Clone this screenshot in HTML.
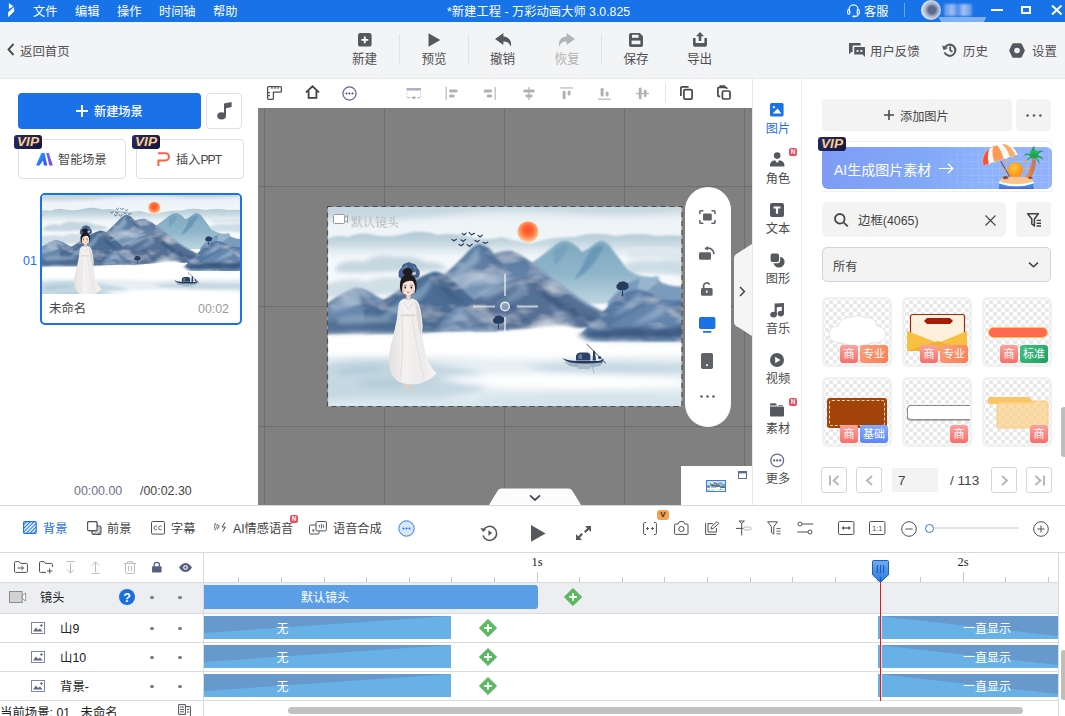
<!DOCTYPE html>
<html lang="zh-CN">
<head>
<meta charset="utf-8">
<title>万彩动画大师</title>
<style>
*{box-sizing:border-box;margin:0;padding:0}
html,body{width:1065px;height:716px;overflow:hidden;background:#fff}
body{font-family:"Liberation Sans","Noto Sans CJK SC",sans-serif;font-size:13px;color:#333;position:relative}
.abs{position:absolute}
#app{position:absolute;left:0;top:0;width:1065px;height:716px;overflow:hidden;background:#fff}
svg{display:block;overflow:visible}
.t{position:absolute;white-space:nowrap;line-height:1;margin-top:1px}
/* title bar */
#title{left:0;top:0;width:1065px;height:22px;background:#1773e7;color:#fff}
#title .t{font-size:12.2px;top:5px}
/* toolbar */
#tool{left:0;top:22px;width:1065px;height:57px;background:#f3f4f6;border-bottom:1px solid #e9eaec}
#tool .lbl{font-size:12.6px;color:#505050;top:29.5px;transform:translateX(-50%)}
#tool .r{font-size:12.4px;color:#505050;top:23px}
#tool .sep{position:absolute;width:1px;top:12px;height:31px;background:#e3e4e7}

.vip{position:absolute;width:28px;height:14px;border-radius:3px;background:linear-gradient(135deg,#2a2a66,#14143f);}
.vip svg{position:absolute;left:0;top:0}
.obtn{position:absolute;border:1px solid #dcdfe6;border-radius:4px;background:#fff}
/* left panel */
#left{left:0;top:79px;width:258px;height:426px;background:#fff}
/* canvas */
#cvbar{left:258px;top:79px;width:494px;height:29px;background:#fff}
#cv{left:258px;top:108px;width:494px;height:397px;background:#808080;overflow:hidden}
/* right */
#rnav{left:752px;top:79px;width:50px;height:426px;background:#fff;border-right:1px solid #ececec}
#rnav .t{font-size:13px;color:#4a4a4a;transform:translateX(-50%);left:25px}
#rpanel{left:802px;top:79px;width:263px;height:426px;background:#fff}

.nb{position:absolute;width:8px;height:8px;border-radius:2px;background:#f0475a;color:#fff;font-size:6.5px;font-weight:700;line-height:8px;text-align:center}
.gbtn{position:absolute;background:#f3f3f3;border-radius:4px}
.tile{position:absolute;width:70px;height:70px;border-radius:6px;border:2px solid #f1f1f1;overflow:hidden;background-color:#fff;background-image:conic-gradient(#e9e9e9 25%,#fff 0 50%,#e9e9e9 0 75%,#fff 0);background-size:8px 8px;background-position:1px 1px}
.bd{position:absolute;height:18px;border-radius:3px;color:#fff;font-size:11px;line-height:18px;text-align:center;top:46px}
.bs{width:18px;background:linear-gradient(180deg,#fda19c,#f5706b)}
.bp{width:28px;background:linear-gradient(135deg,#fca17f,#fb7d52)}
.bg{width:28px;background:linear-gradient(135deg,#45bf85,#1f9f60)}
.bb{width:28px;background:linear-gradient(180deg,#86abff,#5c86f6)}
.pg{position:absolute;top:388px;width:26px;height:26px;border:1px solid #d3d6de;border-radius:3px;background:#fff}
/* timeline */
#tl{left:0;top:505px;width:1065px;height:211px;background:#fff}

#tl .tab{font-size:12.2px;color:#444;top:17px}
#tl .hl{position:absolute;height:1px;background:#d9dbdf}
#tl .dot{position:absolute;width:3.6px;height:3.6px;border-radius:50%;background:#7d7d7d}
#tl .blk{position:absolute;height:23px}
#tl .bt{position:absolute;font-size:12px;color:#fff;line-height:1;white-space:nowrap;margin-top:1px}
</style>
</head>
<body>
<div id="app">
<svg width="0" height="0" style="position:absolute"><defs>
<filter id="b05" x="-10%" y="-10%" width="120%" height="120%"><feGaussianBlur stdDeviation="0.5"/></filter>
<filter id="b1" x="-10%" y="-10%" width="120%" height="120%"><feGaussianBlur stdDeviation="1"/></filter>
<filter id="b2" x="-20%" y="-20%" width="140%" height="140%"><feGaussianBlur stdDeviation="2"/></filter>
<filter id="b3" x="-20%" y="-30%" width="140%" height="160%"><feGaussianBlur stdDeviation="3"/></filter>
<filter id="b5" x="-30%" y="-50%" width="160%" height="200%"><feGaussianBlur stdDeviation="5"/></filter>
<filter id="tex" x="-5%" y="-5%" width="110%" height="110%"><feTurbulence type="fractalNoise" baseFrequency="0.025 0.05" numOctaves="3" seed="7" result="n"/><feColorMatrix in="n" type="matrix" values="0 0 0 0 0.9  0 0 0 0 0.94  0 0 0 0 0.98  1.45 0 0 0 -0.71" result="w"/><feGaussianBlur in="SourceGraphic" stdDeviation="1" result="bl"/><feComposite in="w" in2="bl" operator="in" result="wm"/><feMerge><feMergeNode in="bl"/><feMergeNode in="wm"/></feMerge></filter>
<filter id="texd" x="-5%" y="-5%" width="110%" height="110%"><feTurbulence type="fractalNoise" baseFrequency="0.05 0.03" numOctaves="2" seed="11" result="n"/><feColorMatrix in="n" type="matrix" values="0 0 0 0 0.16  0 0 0 0 0.25  0 0 0 0 0.42  2.6 0 0 0 -1.15" result="w"/><feGaussianBlur in="SourceGraphic" stdDeviation="1" result="bl"/><feComposite in="w" in2="bl" operator="in" result="wm"/><feMerge><feMergeNode in="bl"/><feMergeNode in="wm"/></feMerge></filter>
<linearGradient id="bd1" x1="0" y1="0" x2="0" y2="1"><stop offset="0" stop-color="#aec7d4"/><stop offset="0.45" stop-color="#c2d5df" stop-opacity="0.85"/><stop offset="1" stop-color="#dde8ee" stop-opacity="0"/></linearGradient>
<linearGradient id="sky" x1="0" y1="0" x2="0" y2="1"><stop offset="0" stop-color="#dfe9ee"/><stop offset="0.08" stop-color="#edf3f6"/><stop offset="0.3" stop-color="#f6f9fb"/><stop offset="0.6" stop-color="#f9fbfc"/><stop offset="1" stop-color="#e3edf2"/></linearGradient>
<radialGradient id="sun" cx="0.5" cy="0.42" r="0.55"><stop offset="0" stop-color="#ff4f22"/><stop offset="0.45" stop-color="#ff6a38"/><stop offset="0.8" stop-color="#ffa873"/><stop offset="1" stop-color="#ffd6a8"/></radialGradient>
<linearGradient id="mt1" x1="0" y1="0" x2="0" y2="1"><stop offset="0" stop-color="#5d7ea3"/><stop offset="0.5" stop-color="#4a6b92"/><stop offset="1" stop-color="#6f8fb1"/></linearGradient>
<linearGradient id="mt2" x1="0" y1="0" x2="0" y2="1"><stop offset="0" stop-color="#46678f"/><stop offset="0.6" stop-color="#587aa0"/><stop offset="1" stop-color="#7d9cba"/></linearGradient>
<linearGradient id="mtA" x1="0" y1="0" x2="0" y2="1"><stop offset="0" stop-color="#55769d"/><stop offset="0.4" stop-color="#6584a8"/><stop offset="0.75" stop-color="#8da7c2"/><stop offset="1" stop-color="#cbd9e4"/></linearGradient>
<linearGradient id="far" x1="0" y1="0" x2="0" y2="1"><stop offset="0" stop-color="#7ea8c1"/><stop offset="0.5" stop-color="#8fb5ca"/><stop offset="1" stop-color="#c3d8e2"/></linearGradient>
<linearGradient id="dress" x1="0" y1="0" x2="1" y2="0"><stop offset="0" stop-color="#e4e0e0"/><stop offset="0.35" stop-color="#f4f2f1"/><stop offset="0.7" stop-color="#eceaea"/><stop offset="1" stop-color="#f7f6f5"/></linearGradient>
<symbol id="scene" viewBox="0 0 354 200" overflow="hidden">
<rect width="354" height="200" fill="url(#sky)"/>
<!-- top haze -->
<g filter="url(#b3)"><path d="M-10 -8 H364 V5 Q300 12 240 7 T120 9 T-10 12 Z" fill="#b9cfda" opacity="0.7"/></g>
<!-- cloud band 1 -->
<g filter="url(#b1)" transform="translate(0 1)">
<path d="M-6 34 Q6 27 20 30 Q32 24 46 28 Q60 31 76 27 Q94 22 110 28 Q126 25 140 30 Q158 34 174 30 Q190 35 204 36 Q226 29 246 30 Q266 24 288 29 Q310 25 330 29 Q344 27 360 30 V52 H-6 Z" fill="url(#bd1)"/>
</g>
<!-- cloud band 2 left -->
<g filter="url(#b2)">
<path d="M8 60 Q20 52 36 56 Q50 46 68 51 Q86 49 98 56 Q112 55 120 62 Q100 67 70 65 Q36 68 8 66 Z" fill="#c6d7e0"/>
<path d="M-6 80 Q16 70 40 75 Q56 68 78 73 Q92 72 104 78 L100 86 L-6 92 Z" fill="#cfdde5" opacity="0.95"/>
<path d="M100 70 Q118 62 132 66 L120 76 Z" fill="#d2e0e7" opacity="0.8"/>
</g>
<!-- right cloud -->
<g filter="url(#b2)"><path d="M296 58 Q312 52 330 55 Q344 52 360 56 V70 Q330 66 300 68 Z" fill="#cddde5"/><path d="M300 44 Q330 40 360 46 V54 Q330 50 300 52 Z" fill="#dbe7ec"/></g>
<!-- sun -->
<circle cx="200" cy="26" r="10.6" fill="url(#sun)" filter="url(#b05)"/>
<!-- far mountains -->
<g filter="url(#b1)">
<path d="M196 62 Q214 50 226 40 Q234 33 242 36 Q250 40 254 46 Q262 42 268 37 Q275 32 282 40 Q292 54 300 64 Q316 74 330 70 L340 96 L196 100 Z" fill="url(#far)"/>
<path d="M262 44 Q270 38 276 40 Q272 50 262 62 Q254 70 246 74 Q256 58 262 44 Z" fill="#5f8fb0" opacity="0.7"/>
<path d="M226 44 Q234 38 240 40 Q236 52 226 60 Z" fill="#6d9bb8" opacity="0.6"/>
</g>
<!-- right back mountain -->
<g filter="url(#b1)"><path d="M280 96 Q296 76 312 72 Q322 70 332 76 Q346 82 360 80 V112 H280 Z" fill="#7a9bbc"/>
<path d="M312 72 Q322 70 330 76 Q322 84 306 92 Q310 82 312 72 Z" fill="#a3bcd2" opacity="0.8"/></g>
<!-- main big mountain -->
<g filter="url(#tex)">
<path d="M100 84 Q122 64 136 50 Q146 38 152 38 Q160 40 166 48 Q176 44 184 45 Q196 50 208 60 Q224 72 240 84 Q262 100 290 112 L290 122 L100 122 Z" fill="url(#mtA)"/>
</g>
<g filter="url(#b2)">
<path d="M150 40 Q140 56 122 70 Q140 68 152 54 Z" fill="#8eabc8" opacity="0.85"/>
<path d="M154 42 Q162 56 178 66 Q168 50 160 44 Z" fill="#48668d" opacity="0.7"/>
<path d="M184 47 Q198 58 214 70 Q230 82 246 92 Q226 78 208 64 Q196 52 184 47 Z" fill="#4a688f" opacity="0.55"/>
<path d="M120 72 Q150 62 190 74 Q166 80 120 80 Z" fill="#b4c8da" opacity="0.6"/>
</g>
<!-- far-left mountain -->
<g filter="url(#tex)">
<path d="M-4 100 Q10 88 27 82 Q38 82 48 90 Q58 96 72 98 L72 128 L-4 128 Z" fill="#6788ac"/>
</g>
<g filter="url(#b2)">
<path d="M27 83 Q18 96 2 106 Q20 104 32 94 Z" fill="#9bb6cf" opacity="0.8"/>
<path d="M30 84 Q42 100 60 110 Q44 110 34 100 Z" fill="#456389" opacity="0.6"/>
</g>
<!-- mid-left mountain -->
<g filter="url(#tex)">
<path d="M36 104 Q58 94 74 82 Q92 70 106 65.6 Q116 66 126 76 Q140 90 160 104 Q170 112 182 124 L36 128 Z" fill="#4b6c93"/>
</g>
<g filter="url(#b2)">
<path d="M106 67 Q96 82 78 92 Q62 100 52 114 Q76 106 94 92 Q104 82 106 67 Z" fill="#86a5c3" opacity="0.8"/>
<path d="M108 68 Q120 86 138 98 Q126 96 116 86 Q110 78 108 68 Z" fill="#34537b" opacity="0.65"/>
<path d="M84 100 Q94 108 100 120 Q90 116 84 100 Z" fill="#36557d" opacity="0.5"/>
</g>
<!-- front centre mountain -->
<g filter="url(#tex)">
<path d="M138 100 Q160 84 178 76 Q196 70 210 72 Q226 78 246 92 Q268 106 292 113 Q270 124 240 121 Q220 119 200 123 L146 126 Z" fill="#546f95"/>
</g>
<g filter="url(#b2)">
<path d="M148 88 Q170 76 196 75 Q178 84 158 93 Z" fill="#a9c0d5" opacity="0.6"/>
<path d="M196 74 Q186 88 166 100 Q186 98 200 86 Z" fill="#7d9bbb" opacity="0.7"/>
<path d="M206 74 Q220 90 244 102 Q262 112 280 116 Q254 114 232 104 Q214 94 206 74 Z" fill="#35517a" opacity="0.75"/>
<path d="M176 92 Q190 104 206 118 Q190 112 180 104 Z" fill="#3a577f" opacity="0.55"/>
<path d="M222 96 Q232 108 250 116 Q236 116 226 108 Z" fill="#8aa6c3" opacity="0.5"/>
</g>
<!-- small front hill -->
<g filter="url(#tex)">
<path d="M106 124 Q120 106 133 100 Q146 102 160 116 L170 126 Z" fill="#6383a9"/>
</g>
<g filter="url(#b2)">
<path d="M133 101 Q124 112 112 122 Q128 118 136 108 Z" fill="#90adc9" opacity="0.7"/>
<path d="M136 102 Q146 112 160 122 Q148 120 140 112 Z" fill="#3d5b83" opacity="0.6"/>
</g>
<!-- right dark mountains -->
<g filter="url(#tex)">
<path d="M262 118 Q278 102 292 90 Q304 82 314 84 Q326 90 340 94 Q350 96 360 92 V134 H244 Q254 128 262 118 Z" fill="#5677a0"/>
<path d="M276 124 Q300 108 320 98 Q332 93 342 96 Q352 100 360 104 V136 H246 Q262 132 276 124 Z" fill="#6485ab"/>
</g>
<g filter="url(#b2)">
<path d="M312 85 Q300 98 282 110 Q302 106 316 94 Z" fill="#93afca" opacity="0.7"/>
<path d="M336 97 Q322 108 304 118 Q324 116 338 106 Z" fill="#9ab5cf" opacity="0.7"/>
<path d="M340 98 Q348 108 360 114 V104 Q350 102 340 98 Z" fill="#3a5981" opacity="0.6"/>
<path d="M246 130 Q284 120 322 122 Q344 124 360 118 V132 H240 Z" fill="#36557d" opacity="0.9"/>
</g>
<!-- bottom dark edge of left mountains -->
<g filter="url(#b2)">
<path d="M-4 116 Q30 110 60 116 Q90 122 120 120 Q104 128 60 127 L-4 128 Z" fill="#4a6a91" opacity="0.85"/>
<path d="M10 112 Q40 106 70 114 Q40 118 10 118 Z" fill="#a9c0d6" opacity="0.5"/>
</g>
<!-- trees -->
<g filter="url(#b05)" fill="#263c60">
<g transform="translate(170.6 116.4) scale(0.82) translate(-171 -115)"><path d="M164.6 114.4 Q163 111 166 109.6 Q166.6 106.6 170 107 Q173 105.6 175 108 Q178.4 108.6 177.6 111.6 Q179 114 176 115.4 Q174 117.4 171.4 116 L171.8 123.6 H170 L170.4 116.4 Q166.6 117.4 164.6 114.4 Z"/></g>
<g transform="translate(294.6 82.6) scale(0.86) translate(-294.4 -81)"><path d="M287.6 80.6 Q286 77 289 75.6 Q289.6 72.6 293 73 Q296 71.6 298.4 74 Q302 74.6 301 77.8 Q302.4 80.4 299.4 81.6 Q297.4 83.6 294.8 82.2 L295.2 89.8 H293.4 L293.8 82.6 Q289.8 83.6 287.6 80.6 Z"/></g>
</g>
<!-- mist -->
<g filter="url(#b3)">
<path d="M-10 131 Q40 126 90 130 Q130 128 150 126 Q176 128 196 124 Q216 118 240 120 Q250 126 262 136 Q310 142 364 138 V156 H-10 Z" fill="#ffffff"/>
<path d="M190 126 Q214 116 240 118 Q252 124 250 134 Q226 140 204 138 Z" fill="#ffffff"/>
</g>
<!-- water -->
<g filter="url(#b3)">
<rect x="-10" y="150" width="374" height="60" fill="#e6eff3"/>
<path d="M-10 148 Q60 144 120 150 Q200 156 280 148 Q330 146 364 152 V142 H-10 Z" fill="#ffffff"/>
<path d="M-10 158 Q30 150 80 154 Q120 158 150 166 Q170 176 150 186 Q100 196 40 192 Q10 192 -10 196 Z" fill="#c4d8e2"/>
<path d="M10 164 Q40 158 64 162 Q40 168 10 168 Z" fill="#a9c4d3" opacity="0.8"/>
<path d="M30 176 Q70 170 110 176 Q70 182 30 180 Z" fill="#adc7d5" opacity="0.8"/>
<path d="M196 160 Q260 154 364 158 V166 Q300 170 240 166 Q214 166 196 160 Z" fill="#c0d5e0" opacity="0.9"/>
<path d="M110 172 Q200 164 300 170 Q364 172 364 180 Q280 184 200 182 Q150 182 110 172 Z" fill="#ffffff" opacity="0.95"/>
<path d="M150 190 Q240 184 364 188 V206 H150 Z" fill="#d3e2ea" opacity="0.9"/>
<path d="M-10 194 Q60 188 150 194 V206 H-10 Z" fill="#d9e6ed" opacity="0.9"/>
</g>
<!-- birds -->
<g fill="none" stroke="#2b3f63" stroke-width="1.2" stroke-linecap="round" transform="translate(0 -1.6)">
<path d="M124 35 l2 1.4 l2.4 -1.6"/><path d="M134 29 l2 1.6 l2 -1.8"/><path d="M141 28 l2.4 2.4 l3 -1.4"/><path d="M133 35.4 l2.2 1.6 l2.4 -2"/>
<path d="M150 31 l2 1.6 l2.2 -1.8"/><path d="M147 36 l2.2 1.4 l2 -1.2"/><path d="M131 40 l2.2 1.4 l2.4 -2"/><path d="M139 40 l2.4 2 l2.8 -2.2"/><path d="M155 38 l2.4 1 l2.4 -1.2"/>
</g>
<!-- boat -->
<g filter="url(#b05)" opacity="0.35"><path d="M236 156 Q256 158 276 156 L272 160 Q256 163 242 160 Z" fill="#4a6386"/><path d="M250 158 H262 V163 H250 Z" fill="#6c84a3"/><path d="M264 158 L266 168" stroke="#4a6386" stroke-width="0.8"/></g>
<g>
<path d="M234 152 Q240 155 250 155 H270 Q274 154.6 276 152.4 L274 156.6 Q256 158.4 242 156.6 Q237 155 234 152 Z" fill="#27395c"/>
<path d="M248 154.6 V149.4 Q249 146.6 252 146.4 H259 Q262 146.8 262.4 149.6 V154.6 Z" fill="#2c4166"/>
<rect x="250.6" y="148.4" width="3.4" height="4.6" fill="#7f93ad" opacity="0.7"/>
<path d="M258.6 138 L278 157.4" stroke="#27395c" stroke-width="0.9" fill="none"/>
<path d="M264.6 154.6 L265 148 Q264.6 145.4 266 144.6 Q267.6 145 267.2 148 L268 154.6 Z" fill="#27395c"/>
<circle cx="271.6" cy="151.6" r="1.5" fill="#27395c"/>
</g>
<!-- character -->
<g>
<!-- fan behind head -->
<path d="M70.6 70 Q70 64 73.6 62 Q74 57.6 78.6 57 Q81 55.4 84 57.4 Q88.6 57.6 89 62 Q92.6 64 91.6 69 Q91 72 88 72.6 L73 72.6 Q71 72 70.6 70 Z" fill="#42618b" filter="url(#b05)"/>
<path d="M74 64 Q76 59 80 59 Q78 62 77.6 66 Z M84 59 Q88 61 88.6 66 Q86 63 84 59 Z" fill="#6d8bb0" opacity="0.8" filter="url(#b05)"/>
<!-- dress -->
<path d="M77 92.6 Q71 94 70.4 100 Q69.6 108 68.6 114 Q66 128 62.6 140 Q60 152 61.6 162 Q63 170 69.6 175 Q76 178.6 84 178.4 Q90 178.6 94 177 Q102 174 108.6 167.4 Q101 160 97.6 148 Q95.6 138 94 128 Q95.6 120 94 113 Q93 104 91 98 Q89 93.6 84 92.6 Q80.6 95.6 77 92.6 Z" fill="url(#dress)"/>
<path d="M86 94 Q91.6 99 92.6 112 Q94 122 92.6 130 Q90 120 88.6 110 Q88.6 100 86 94 Z" fill="#d8d5d5" opacity="0.85"/>
<path d="M74 110 Q76 140 72 174" stroke="#dcd9d9" stroke-width="0.9" fill="none" opacity="0.9"/>
<path d="M84 112 Q88 140 96 172" stroke="#dedbdb" stroke-width="0.9" fill="none" opacity="0.9"/>
<path d="M72.6 108 H87 V110.6 H72.6 Z" fill="#ddd6d4" opacity="0.8"/>
<path d="M76 96 L80.6 104 L85 96" stroke="#d9d5d4" stroke-width="0.8" fill="none"/>
<!-- neck & face -->
<path d="M78.4 87 H82.6 V94 Q80.6 96 78.4 94 Z" fill="#f0d3c8"/>
<ellipse cx="80.2" cy="81" rx="7.6" ry="8.2" fill="#f7e1d8"/>
<!-- hair -->
<path d="M72 82 Q71 69 80.2 68.4 Q89.6 69 88.6 82 Q88 86 87 87.4 Q88 79 84.6 75 Q79 73.6 75 77.6 Q73.6 82 74.4 87.4 Q72.6 86 72 82 Z" fill="#1e1b1f"/>
<ellipse cx="79.6" cy="65.8" rx="4.8" ry="3.9" fill="#1e1b1f"/>
<path d="M84 67 l3.4 -1.4 l0.8 2.6 l-3 1 Z" fill="#cfcdd2"/>
<ellipse cx="77.2" cy="81.6" rx="0.9" ry="1.1" fill="#2a2020"/><ellipse cx="83.4" cy="81.6" rx="0.9" ry="1.1" fill="#2a2020"/>
<path d="M75.8 79.6 Q77.2 78.8 78.6 79.6 M82 79.6 Q83.4 78.8 84.8 79.6" stroke="#2a2020" stroke-width="0.5" fill="none"/>
<path d="M79 86 Q80.2 87 81.6 86" stroke="#d5574f" stroke-width="0.9" fill="none"/>
<circle cx="76" cy="84.4" r="1.4" fill="#f3c3b8" opacity="0.7"/><circle cx="84.6" cy="84.4" r="1.4" fill="#f3c3b8" opacity="0.7"/>
<!-- feet -->
<path d="M75.6 178 h4 l0.2 5.6 h-5 Z M81 178 h3.6 l1 5.6 h-5 Z" fill="#d9cfc6"/>
</g>
</symbol>
</defs></svg>


<!-- TITLE -->
<div id="title" class="abs">
<svg class="abs" style="left:8px;top:2px" width="7" height="16" viewBox="0 0 7 16"><path d="M0.9 0.9 L5.2 4.2 L3.4 5.8 L0.9 7 Z" fill="#fff"/><path d="M6.1 5.1 V9.4 L0.1 15.2 V10.3 Z" fill="#fff"/></svg>
<span class="t" style="left:33px">文件</span>
<span class="t" style="left:75px">编辑</span>
<span class="t" style="left:117px">操作</span>
<span class="t" style="left:159px">时间轴</span>
<span class="t" style="left:213px">帮助</span>
<span class="t" style="left:447px;font-size:12.3px">*新建工程 - 万彩动画大师 3.0.825</span>
<svg class="abs" style="left:846.6px;top:3.6px" width="13" height="14" viewBox="0 0 13 14" fill="none" stroke="#fff" stroke-width="1.15"><path d="M2 6 V5.4 a4.5 4.6 0 0 1 9 0 V6"/><rect x="0.7" y="5.6" width="2.1" height="4.6" rx="1.05"/><rect x="10.2" y="5.6" width="2.1" height="4.6" rx="1.05"/><path d="M11.2 10.2 q-0.2 2 -2.8 2.2"/><rect x="5.4" y="11.6" width="3.4" height="1.6" rx="0.8" fill="#fff" stroke="none"/></svg>
<span class="t" style="left:864px">客服</span>
<div class="abs" style="left:904px;top:3px;width:1px;height:14px;background:#6ea4ef"></div>
<div class="abs" style="left:939px;top:17px;width:47px;height:6px;background:#7fb0f2;border-radius:0 0 14px 14px"></div>
<div class="abs" style="left:921px;top:0px;width:20px;height:20px;border-radius:50%;background:radial-gradient(circle at 55% 50%,#5c6a8c 0 25%,#aab6cf 45%,#dfe6f2 70%)"></div>
<div class="abs" style="left:944px;top:4px;width:28px;height:12px;background:linear-gradient(90deg,#5c93ea,#9dbff3 30%,#4d88e6 50%,#a8c6f4 70%,#5c93ea);filter:blur(1px)"></div>
<div class="abs" style="left:991px;top:9px;width:12px;height:2px;background:#fff"></div>
<div class="abs" style="left:1021px;top:6px;width:10px;height:8px;border:2px solid #fff"></div>
<svg class="abs" style="left:1051px;top:5px" width="12" height="10" viewBox="0 0 12 10" stroke="#fff" stroke-width="2" fill="none"><path d="M1 0.5 L10.5 9.5 M10.5 0.5 L1 9.5"/></svg>
</div>

<!-- TOOLBAR -->
<div id="tool" class="abs">
<svg class="abs" style="left:7px;top:21px" width="8" height="13" viewBox="0 0 8 13" fill="none" stroke="#4a4a4a" stroke-width="1.9"><path d="M6.5 1 L1.5 6.5 L6.5 12"/></svg>
<span class="t r" style="left:20px">返回首页</span>
<!-- new -->
<svg class="abs" style="left:358px;top:11px" width="14" height="14" viewBox="0 0 14 14"><rect width="13.6" height="13.6" rx="2.2" fill="#55595f"/><path d="M6.8 3.4 V10.2 M3.4 6.8 H10.2" stroke="#fff" stroke-width="1.8"/></svg>
<span class="t lbl" style="left:364.5px">新建</span>
<div class="sep" style="left:399px"></div>
<svg class="abs" style="left:428px;top:11px" width="13" height="14" viewBox="0 0 13 14"><path d="M0.5 0.3 L12.3 7 L0.5 13.7 Z" fill="#55595f"/></svg>
<span class="t lbl" style="left:434px;top:30px">预览</span>
<div class="sep" style="left:468px"></div>
<svg class="abs" style="left:495px;top:11px" width="17" height="14" viewBox="0 0 17 14"><path d="M8.4 0 L0 6 L8.4 12 V8.6 C12 8.5 14.4 9.8 15.8 13.6 C17.2 7.8 13.6 3.6 8.4 3.4 Z" fill="#55595f"/></svg>
<span class="t lbl" style="left:502.5px">撤销</span>
<svg class="abs" style="left:558px;top:11px" width="17" height="14" viewBox="0 0 17 14"><path d="M8.6 0 L17 6 L8.6 12 V8.6 C5 8.5 2.6 9.8 1.2 13.6 C-0.2 7.8 3.4 3.6 8.6 3.4 Z" fill="#b1b3b6"/></svg>
<span class="t lbl" style="left:567px;color:#b4b4b4">恢复</span>
<div class="sep" style="left:601px"></div>
<svg class="abs" style="left:629px;top:11px" width="14" height="14" viewBox="0 0 14 14"><path d="M2 0 H10.8 L14 3.2 V12 a2 2 0 0 1 -2 2 H2 a2 2 0 0 1 -2 -2 V2 a2 2 0 0 1 2 -2 Z" fill="#55595f"/><rect x="3" y="1.8" width="6.6" height="3" fill="#f3f4f6"/><rect x="2.6" y="7.6" width="8.8" height="3.6" fill="#f3f4f6"/></svg>
<span class="t lbl" style="left:636px;top:30px">保存</span>
<svg class="abs" style="left:693px;top:10px" width="14" height="15" viewBox="0 0 14 15"><path d="M0 6 H2.6 V11 H11.4 V6 H14 V12.8 a2 2 0 0 1 -2 2 H2 a2 2 0 0 1 -2 -2 Z" fill="#55595f"/><path d="M7 0 L11 4.2 H8.3 V9 H5.7 V4.2 H3 Z" fill="#55595f"/></svg>
<span class="t lbl" style="left:699.5px">导出</span>
<!-- right -->
<svg class="abs" style="left:849px;top:20.8px" width="16" height="14" viewBox="0 0 16 14"><path d="M0 0 H11.6 V2.6 H3.6 V9 H2.4 L0 11.2 Z" fill="#55595f"/><path d="M5.2 4.1 H16 V14 L13.6 11.6 H5.2 Z" fill="#55595f"/><rect x="7.6" y="7" width="1.9" height="1.9" fill="#f3f4f6"/><rect x="11.4" y="7" width="1.9" height="1.9" fill="#f3f4f6"/></svg>
<span class="t r" style="left:870px">用户反馈</span>
<svg class="abs" style="left:942px;top:21.4px" width="15" height="14" viewBox="0 0 15 14" fill="none" stroke="#55595f" stroke-width="2.1"><path d="M2.8 4.6 A5.6 5.6 0 1 1 2.6 9.4"/><path d="M0 2.4 L1.6 7.2 L6.2 5 Z" fill="#55595f" stroke="none"/><path d="M8.2 3.6 V7.2 L10.4 8.8" stroke-width="1.8"/></svg>
<span class="t r" style="left:963px">历史</span>
<svg class="abs" style="left:1009px;top:20.6px" width="16" height="15" viewBox="0 0 16 15"><path d="M4.6 0.3 H11.4 a1.6 1.6 0 0 1 1.4 0.8 L15.6 6.7 a1.6 1.6 0 0 1 0 1.6 L12.8 13.9 a1.6 1.6 0 0 1 -1.4 0.8 H4.6 a1.6 1.6 0 0 1 -1.4 -0.8 L0.4 8.3 a1.6 1.6 0 0 1 0 -1.6 L3.2 1.1 a1.6 1.6 0 0 1 1.4 -0.8 Z" fill="#55595f"/><circle cx="8" cy="7.5" r="2.8" fill="#f3f4f6"/></svg>
<span class="t r" style="left:1032px">设置</span>
</div>

<!-- LEFT -->
<div id="left" class="abs">
<div class="abs" style="left:18px;top:14px;width:183px;height:36px;background:#1a71e8;border-radius:4px"></div>
<svg class="abs" style="left:76px;top:26px" width="12" height="12" viewBox="0 0 12 12" stroke="#fff" stroke-width="2"><path d="M6 0 V12 M0 6 H12"/></svg>
<span class="t" style="left:94px;top:26px;font-size:12.2px;color:#fff;font-weight:500">新建场景</span>
<div class="obtn" style="left:206px;top:14px;width:36px;height:36px"></div>
<svg class="abs" style="left:217px;top:23px" width="15" height="18" viewBox="0 0 15 18"><ellipse cx="4.6" cy="13.8" rx="4.4" ry="3.6" fill="#55595f"/><path d="M7 14 V1.4 L14.6 0 V5 L9 6.2 V14 Z" fill="#55595f"/></svg>
<div class="obtn" style="left:18px;top:60px;width:108px;height:40px"></div>
<div class="obtn" style="left:136px;top:60px;width:108px;height:40px"></div>
<div class="vip" style="left:14px;top:56px"><svg width="28" height="14" viewBox="0 0 28 14"><text x="3" y="11.4" font-family="Liberation Sans, sans-serif" font-weight="700" font-style="italic" font-size="12" fill="#f6cf8a" textLength="22" lengthAdjust="spacingAndGlyphs">VIP</text></svg></div>
<div class="vip" style="left:132px;top:56px"><svg width="28" height="14" viewBox="0 0 28 14"><text x="3" y="11.4" font-family="Liberation Sans, sans-serif" font-weight="700" font-style="italic" font-size="12" fill="#f6cf8a" textLength="22" lengthAdjust="spacingAndGlyphs">VIP</text></svg></div>
<svg class="abs" style="left:35.5px;top:74px" width="17" height="13" viewBox="0 0 17 13"><defs><linearGradient id="ag" x1="0" y1="0" x2="1" y2="1"><stop offset="0" stop-color="#28a8ff"/><stop offset="1" stop-color="#2d4df0"/></linearGradient><linearGradient id="ag2" x1="0" y1="0" x2="1" y2="1"><stop offset="0" stop-color="#5b6bff"/><stop offset="1" stop-color="#8a3df0"/></linearGradient></defs><path d="M5.4 0 H8.6 L11.2 12.6 H8 L7 7.4 L3.4 12.6 H0 Z" fill="url(#ag)"/><path d="M10.2 0 H12.8 L16.8 12.6 H13.4 Z" fill="url(#ag2)"/></svg>
<span class="t" style="left:58px;top:74px;font-size:12.2px;color:#474747">智能场景</span>
<svg class="abs" style="left:156.5px;top:73px" width="14" height="14" viewBox="0 0 14 14" fill="none" stroke="#fb6346" stroke-width="2"><path d="M1 1.2 H8.4 a3.6 3.6 0 0 1 0 7.2 H1.4 V14"/></svg>
<span class="t" style="left:176px;top:74px;font-size:12.2px;color:#474747">插入<span style="letter-spacing:-0.9px">PPT</span></span>
<!-- scene card -->
<span class="t" style="left:23px;top:174.5px;font-size:12.5px;color:#1a71e8">01</span>
<div class="abs" style="left:40px;top:114px;width:202px;height:132px;border:2px solid #1a71e8;border-radius:5px;background:#fff;overflow:hidden">
<svg class="abs" style="left:0;top:0;overflow:hidden" width="198" height="99" viewBox="5 3.7 344 172.2" preserveAspectRatio="none"><use href="#scene" x="0" y="0" width="354" height="200"/></svg>
<span class="t" style="left:7px;top:107px;font-size:12.4px;color:#474747">未命名</span>
<span class="t" style="left:156px;top:106.5px;font-size:12.4px;color:#9a9a9a">00:02</span>
</div>
<span class="t" style="left:74px;top:405px;font-size:12.4px;color:#6b7088">00:00.00</span>
<span class="t" style="left:140px;top:405px;font-size:12.4px;color:#444">/00:02.30</span>
</div>

<!-- CANVAS BAR -->
<div id="cvbar" class="abs">
<!-- ruler -->
<svg class="abs" style="left:9px;top:7px" width="15" height="14" viewBox="0 0 15 14" fill="none" stroke="#4d5056" stroke-width="1.3"><path d="M1.6 0.7 H13.4 a1 1 0 0 1 1 1 V5.2 a1 1 0 0 1 -1 1 H6.4 V12.4 a1 1 0 0 1 -1 1 H1.6 a1 1 0 0 1 -1 -1 V1.7 a1 1 0 0 1 1 -1 Z"/><path d="M5 0.8 V3 M8 0.8 V3 M11 0.8 V3 M0.8 6.6 H3 M0.8 9.6 H3" stroke-width="1.1"/></svg>
<!-- home -->
<svg class="abs" style="left:47px;top:6px" width="15" height="14" viewBox="0 0 15 14" fill="none" stroke="#3f4247" stroke-width="1.8" stroke-linejoin="miter"><path d="M1 7.4 L7.5 1.3 L14 7.4 M3.6 6 V12.8 H11.4 V6"/></svg>
<!-- dots circle -->
<svg class="abs" style="left:84px;top:7px" width="15" height="15" viewBox="0 0 15 15"><circle cx="7.5" cy="7.5" r="6.6" fill="none" stroke="#606795" stroke-width="1.25"/><circle cx="4.5" cy="7.5" r="1.05" fill="#4a4f80"/><circle cx="7.5" cy="7.5" r="1.05" fill="#4a4f80"/><circle cx="10.5" cy="7.5" r="1.05" fill="#4a4f80"/></svg>
<!-- same size -->
<svg class="abs" style="left:148px;top:9px" width="16" height="12" viewBox="0 0 16 12"><rect x="0.5" y="0" width="14.5" height="2.6" fill="#aeb1c0"/><path d="M1 4 V10 M14.5 4 V10" stroke="#b9bccb" stroke-width="0.8" stroke-dasharray="1 1"/><rect x="6" y="8.6" width="3.6" height="2.2" fill="#aeb1c0"/><path d="M1.4 9.7 H4.6 M11 9.7 H14.2" stroke="#aeb1c0" stroke-width="1"/></svg>
<!-- align left -->
<svg class="abs" style="left:187px;top:8px" width="13" height="13" viewBox="0 0 13 13"><rect x="0.6" y="0" width="1.1" height="13" fill="#aeb1b5"/><rect x="4" y="2.4" width="8.6" height="3" rx="1.5" fill="#aeb1b5"/><rect x="4" y="7.6" width="5.6" height="3" rx="1.5" fill="#aeb1b5"/></svg>
<!-- align right -->
<svg class="abs" style="left:225px;top:8px" width="13" height="13" viewBox="0 0 13 13"><rect x="11.6" y="0" width="1.1" height="13" fill="#aeb1b5"/><rect x="0.6" y="2.4" width="8.6" height="3" rx="1.5" fill="#aeb1b5"/><rect x="3.6" y="7.6" width="5.6" height="3" rx="1.5" fill="#aeb1b5"/></svg>
<!-- center h -->
<svg class="abs" style="left:265px;top:8px" width="12" height="13" viewBox="0 0 12 13"><rect x="5.4" y="0" width="1.2" height="13" fill="#aeb1b5"/><rect x="0.2" y="2.6" width="11.6" height="2.8" rx="1.4" fill="#aeb1b5"/><rect x="2.4" y="7.6" width="7.2" height="2.8" rx="1.4" fill="#aeb1b5"/></svg>
<!-- align top -->
<svg class="abs" style="left:302px;top:8px" width="13" height="13" viewBox="0 0 13 13"><rect x="0" y="0.4" width="13" height="1.1" fill="#aeb1b5"/><rect x="2.6" y="3.6" width="3" height="8.6" rx="1.5" fill="#aeb1b5"/><rect x="7.6" y="3.6" width="3" height="5" rx="1.5" fill="#aeb1b5"/></svg>
<!-- align bottom -->
<svg class="abs" style="left:340px;top:8px" width="13" height="13" viewBox="0 0 13 13"><rect x="0" y="11.6" width="13" height="1.1" fill="#aeb1b5"/><rect x="2.6" y="0.8" width="3" height="8.6" rx="1.5" fill="#aeb1b5"/><rect x="7.6" y="4.4" width="3" height="5" rx="1.5" fill="#aeb1b5"/></svg>
<!-- center v -->
<svg class="abs" style="left:378px;top:8px" width="13" height="13" viewBox="0 0 13 13"><rect x="0" y="5.9" width="13" height="1.2" fill="#aeb1b5"/><rect x="2.8" y="0.6" width="2.8" height="11.8" rx="1.4" fill="#aeb1b5"/><rect x="7.8" y="2.8" width="2.8" height="7.4" rx="1.4" fill="#aeb1b5"/></svg>
<div class="abs" style="left:407px;top:4px;width:1px;height:20px;background:#e6e6e6"></div>
<!-- copy -->
<svg class="abs" style="left:422px;top:7px" width="13" height="14" viewBox="0 0 13 14" fill="none" stroke="#44474c" stroke-width="1.7"><rect x="3.9" y="3.6" width="8.2" height="9.6" rx="1.2"/><path d="M0.9 10 V2 a1.2 1.2 0 0 1 1.2 -1.2 H8.6"/></svg>
<!-- paste -->
<svg class="abs" style="left:459px;top:6px" width="14" height="15" viewBox="0 0 14 15" fill="none" stroke="#44474c" stroke-width="1.7"><rect x="5.4" y="6" width="7.6" height="8" rx="1.2"/><path d="M3.2 11.4 H2 a1.1 1.1 0 0 1 -1.1 -1.1 V3.4 a1.1 1.1 0 0 1 1.1 -1.1 H8.6 a1.1 1.1 0 0 1 1.1 1.1 V4"/><path d="M3.4 2 V1 H7.4 V2" stroke-width="1.5"/></svg>
</div>

<!-- CANVAS -->
<div id="cv" class="abs">
<!-- grid: coords relative to cv (x-258, y-108) -->
<div class="abs" style="left:6px;top:0;width:1px;height:397px;background:#6e6e6e"></div>
<div class="abs" style="left:126px;top:0;width:1px;height:397px;background:#6e6e6e"></div>
<div class="abs" style="left:246px;top:0;width:1px;height:397px;background:#6e6e6e"></div>
<div class="abs" style="left:366px;top:0;width:1px;height:397px;background:#6e6e6e"></div>
<div class="abs" style="left:486px;top:0;width:1px;height:397px;background:#6e6e6e"></div>
<div class="abs" style="left:0;top:78px;width:494px;height:1px;background:#6e6e6e"></div>
<div class="abs" style="left:0;top:198px;width:494px;height:1px;background:#6e6e6e"></div>
<div class="abs" style="left:0;top:318px;width:494px;height:1px;background:#6e6e6e"></div>
<!-- scene -->
<svg class="abs" style="left:70px;top:98px" width="354" height="200" viewBox="0 0 354 200"><use href="#scene"/></svg>
<svg class="abs" style="left:69px;top:97px" width="356" height="202" viewBox="0 0 356 202"><rect x="0.5" y="1.5" width="354.5" height="200" fill="none" stroke="#9a9a9a" stroke-width="1"/><rect x="0.5" y="1.5" width="354.5" height="200" fill="none" stroke="#4f4f4f" stroke-width="1.2" stroke-dasharray="5 4"/></svg>
<!-- camera label -->
<svg class="abs" style="left:75px;top:106px" width="15" height="10" viewBox="0 0 15 10"><rect x="0.5" y="0.5" width="11" height="9" rx="1" fill="#fff" stroke="#9a9a9a" stroke-width="1"/><path d="M11.5 4 L14.5 1.5 V8.5 L11.5 6 Z" fill="#fff" stroke="#9a9a9a" stroke-width="1"/></svg>
<span class="t" style="left:93px;top:108px;font-size:12px;color:#b5b5b5;font-family:'Liberation Serif','Noto Serif CJK SC',serif">默认镜头</span>
<!-- crosshair -->
<svg class="abs" style="left:214.5px;top:166px" width="66" height="66" viewBox="0 0 66 66"><path d="M32 0 V22 M32 43 V64 M0 32.5 H22 M44 32.5 H65" stroke="#ffffff" stroke-width="1.9" opacity="0.6"/><circle cx="32" cy="32.5" r="4.3" fill="rgba(255,255,255,0.3)" stroke="rgba(255,255,255,0.8)" stroke-width="1.5"/></svg>
<!-- pill -->
<div class="abs" style="left:427px;top:79px;width:46px;height:240px;border-radius:23px;background:#fff"></div>
<svg class="abs" style="left:441px;top:102px" width="17" height="14" viewBox="0 0 17 14" fill="none" stroke="#5f6267" stroke-width="1.5"><path d="M0.8 4 V1.6 a0.8 0.8 0 0 1 0.8 -0.8 H4.4 M12.4 0.8 H15.2 a0.8 0.8 0 0 1 0.8 0.8 V4 M16 10 V12.4 a0.8 0.8 0 0 1 -0.8 0.8 H12.4 M4.4 13.2 H1.6 a0.8 0.8 0 0 1 -0.8 -0.8 V10"/><rect x="4" y="3.6" width="8.8" height="6.8" rx="1.2" fill="#5f6267" stroke="none"/></svg>
<svg class="abs" style="left:441px;top:138px" width="17" height="14" viewBox="0 0 17 14"><rect x="0" y="6.2" width="12" height="7.6" rx="1.4" fill="#5f6267"/><path d="M7.4 2.2 C11.6 1.6 14.8 4 15 8" fill="none" stroke="#5f6267" stroke-width="1.7"/><path d="M8.6 0 L5.4 2.6 L9 4.8 Z" fill="#5f6267"/></svg>
<svg class="abs" style="left:443px;top:174px" width="12" height="14" viewBox="0 0 12 14"><rect x="0" y="6" width="11.6" height="7.8" rx="1.4" fill="#5f6267"/><path d="M2.6 6.4 V4 a3.2 3.2 0 0 1 6 -1.4" fill="none" stroke="#5f6267" stroke-width="1.7"/><rect x="4.9" y="8.8" width="1.8" height="1.8" fill="#fff"/></svg>
<svg class="abs" style="left:441px;top:209px" width="17" height="16" viewBox="0 0 17 16"><rect x="0" y="0" width="16.4" height="12" rx="1.8" fill="#1a71e8"/><rect x="4" y="14" width="8.4" height="1.8" rx="0.6" fill="#1a71e8"/></svg>
<svg class="abs" style="left:443px;top:245px" width="12" height="16" viewBox="0 0 12 16"><rect width="12" height="16" rx="1.8" fill="#5f6267"/><rect x="5.1" y="11.2" width="1.8" height="1.8" fill="#fff"/></svg>
<svg class="abs" style="left:442px;top:287px" width="15" height="3" viewBox="0 0 15 3" fill="#5f6267"><circle cx="1.5" cy="1.5" r="1.35"/><circle cx="7.5" cy="1.5" r="1.35"/><circle cx="13.5" cy="1.5" r="1.35"/></svg>
<!-- side handle -->
<svg class="abs" style="left:476px;top:136px" width="18" height="92" viewBox="0 0 18 92"><path d="M18 0 L4 9 a6 6 0 0 0 -4 6 V77 a6 6 0 0 0 4 6 L18 92 Z" fill="#f5f5f6"/><path d="M6 43 L10.4 47.5 L6 52" fill="none" stroke="#3f4247" stroke-width="1.5"/></svg>
<!-- minimap -->
<div class="abs" style="left:423px;top:358px;width:71px;height:39px;background:#fff"></div>
<svg class="abs" style="left:448px;top:372px" width="20" height="12" viewBox="0 0 354 200" preserveAspectRatio="none"><use href="#scene"/></svg>
<div class="abs" style="left:448px;top:372px;width:20px;height:12px;border:1px solid #2b7fff"></div>
<svg class="abs" style="left:480px;top:363px" width="9" height="8" viewBox="0 0 9 8"><rect x="0.5" y="0.5" width="8" height="7" fill="#fff" stroke="#5a6e8c"/><rect x="0" y="0" width="9" height="2.4" fill="#5a6e8c"/></svg>
<!-- bottom handle -->
<svg class="abs" style="left:231px;top:380px" width="92" height="17" viewBox="0 0 92 17"><path d="M0 17 L8.5 3 a5 5 0 0 1 4.5 -2.4 H79 a5 5 0 0 1 4.5 2.4 L92 17 Z" fill="#fcfcfc"/><path d="M41 7.4 L46 12 L51 7.4" fill="none" stroke="#474b55" stroke-width="1.7"/></svg>
</div>

<!-- RIGHT NAV -->
<div id="rnav" class="abs" style="border-left:1px solid #e9e9e9">
<svg class="abs" style="left:17px;top:24px" width="14" height="14" viewBox="0 0 14 14"><rect width="13.6" height="13.4" rx="1.6" fill="#1a71e8"/><path d="M2.6 10.6 L7.6 5.4 L11.4 10.6 Z" fill="#fff"/><circle cx="3.9" cy="4.2" r="1.1" fill="#fff"/></svg>
<span class="t" style="top:42.5px;color:#1a71e8;font-size:12.2px">图片</span>
<svg class="abs" style="left:17px;top:73px" width="15" height="15" viewBox="0 0 15 15" fill="#55595f"><circle cx="7.2" cy="3.6" r="3.3"/><path d="M0 14.6 V12.6 Q0.4 8.8 5 8.2 L7.2 11 L9.4 8.2 Q14 8.8 14.4 12.6 V14.6 Z"/></svg>
<div class="nb" style="left:36px;top:69px">N</div>
<span class="t" style="top:92.5px;font-size:12.2px">角色</span>
<svg class="abs" style="left:17px;top:124px" width="14" height="14" viewBox="0 0 14 14"><rect width="14" height="14" rx="2" fill="#55595f"/><path d="M3.6 3.6 H10.4 V5.6 H8.1 V10.8 H5.9 V5.6 H3.6 Z" fill="#fff"/></svg>
<span class="t" style="top:142.5px;font-size:12.2px">文本</span>
<svg class="abs" style="left:17px;top:174px" width="15" height="15" viewBox="0 0 15 15"><circle cx="9" cy="9" r="5.6" fill="#55595f"/><rect x="0" y="0" width="9.6" height="9.6" rx="2.4" fill="#55595f" stroke="#fff" stroke-width="1.2"/></svg>
<span class="t" style="top:192.5px;font-size:12.2px">图形</span>
<svg class="abs" style="left:17px;top:224px" width="15" height="15" viewBox="0 0 15 15" fill="#55595f"><path d="M4.6 0.6 L14 0 V10.6 H11.8 V3.8 L6.8 4.2 V11.6 H4.6 Z"/><ellipse cx="3.6" cy="11.6" rx="3.4" ry="2.9"/><ellipse cx="10.8" cy="10.6" rx="3.2" ry="2.8"/></svg>
<span class="t" style="top:242.5px;font-size:12.2px">音乐</span>
<svg class="abs" style="left:17px;top:274px" width="14" height="14" viewBox="0 0 14 14"><circle cx="7" cy="7" r="7" fill="#55595f"/><path d="M5.2 3.8 L10.4 7 L5.2 10.2 Z" fill="#fff"/></svg>
<span class="t" style="top:292.5px;font-size:12.2px">视频</span>
<svg class="abs" style="left:17px;top:324px" width="14" height="14" viewBox="0 0 14 14" fill="#55595f"><path d="M0 1.4 a1.2 1.2 0 0 1 1.2 -1.2 H5.4 L7.4 2.4 H0 Z"/><path d="M0 3.4 H12.8 a1.2 1.2 0 0 1 1.2 1.2 V12.4 a1.2 1.2 0 0 1 -1.2 1.2 H1.2 a1.2 1.2 0 0 1 -1.2 -1.2 Z"/><path d="M8.6 2 H12.8 V2.8 H8.6 Z"/></svg>
<div class="nb" style="left:36px;top:319px">N</div>
<span class="t" style="top:342.5px;font-size:12.2px">素材</span>
<svg class="abs" style="left:17px;top:374px" width="15" height="15" viewBox="0 0 15 15"><circle cx="7.2" cy="7.4" r="6.4" fill="none" stroke="#606795" stroke-width="1.25"/><circle cx="4.2" cy="7.4" r="1.05" fill="#4a4f80"/><circle cx="7.2" cy="7.4" r="1.05" fill="#4a4f80"/><circle cx="10.2" cy="7.4" r="1.05" fill="#4a4f80"/></svg>
<span class="t" style="top:393px;font-size:12.2px">更多</span>
</div>

<!-- RIGHT PANEL -->
<div id="rpanel" class="abs">
<!-- coords relative: x-802, y-79 -->
<div class="gbtn" style="left:20px;top:20px;width:190px;height:32px"></div>
<svg class="abs" style="left:82px;top:31px" width="10" height="10" viewBox="0 0 10 10" stroke="#4a4a4a" stroke-width="1.6"><path d="M5 0 V10 M0 5 H10"/></svg>
<span class="t" style="left:98px;top:30.5px;font-size:12.2px;color:#444">添加图片</span>
<div class="gbtn" style="left:214px;top:20px;width:35px;height:32px"></div>
<svg class="abs" style="left:224px;top:35px" width="16" height="3" viewBox="0 0 16 3" fill="#55595f"><circle cx="1.6" cy="1.5" r="1.3"/><circle cx="8" cy="1.5" r="1.3"/><circle cx="14.4" cy="1.5" r="1.3"/></svg>
<!-- banner -->
<div class="abs" style="left:20px;top:62px;width:230px;height:51px;border:1px solid #efefef;border-left:none;border-radius:0 4px 0 0"></div>
<div class="abs" style="left:20px;top:68px;width:230px;height:42px;border-radius:6px;overflow:hidden;background:linear-gradient(90deg,#7f9cf5 0%,#82a8f8 45%,#8cb3fb 70%,#93b0fb 100%)">
<div class="abs" style="left:100px;top:0;width:130px;height:42px;background-image:linear-gradient(90deg,rgba(255,255,255,.1) 1px,transparent 1px),linear-gradient(rgba(255,255,255,.1) 1px,transparent 1px);background-size:7px 7px;-webkit-mask-image:linear-gradient(90deg,transparent,#000 40%);mask-image:linear-gradient(90deg,transparent,#000 40%)"></div>
<span class="t" style="left:12px;top:15px;font-size:14px;color:#fff">AI生成图片素材</span>
<svg class="abs" style="left:117px;top:16px" width="15" height="11" viewBox="0 0 15 11" fill="none" stroke="#fff" stroke-width="1.2"><path d="M0 5.5 H13.6 M9 0.8 L13.8 5.5 L9 10.2"/></svg>

</div>
<!-- art -->
<svg class="abs" style="left:178px;top:65px" width="66" height="46" viewBox="0 0 66 46">
<defs><radialGradient id="sn" cx="0.42" cy="0.38" r="0.7"><stop offset="0" stop-color="#ffc63e"/><stop offset="0.6" stop-color="#ffa01e"/><stop offset="1" stop-color="#ff8410"/></radialGradient>
<linearGradient id="pt" x1="0" y1="0" x2="1" y2="0"><stop offset="0" stop-color="#e89a5c"/><stop offset="1" stop-color="#c8703c"/></linearGradient></defs>
<path d="M12.4 2.7 L29.8 32.8" stroke="#8a4a3a" stroke-width="1.1"/>
<g transform="translate(19.9 14) rotate(-18)">
<path d="M-18 3 Q-17.6 -12.6 0 -13 Q17.6 -12.6 18 3 Q15 0.4 12 3 Q9 0.4 6 3 Q3 0.4 0 3 Q-3 0.4 -6 3 Q-9 0.4 -12 3 Q-15 0.4 -18 3 Z" fill="#fdfbf8"/>
<path d="M-18 3 Q-17.6 -9 -7 -12 Q-12 -6 -12.4 2.6 Q-15 0.6 -18 3 Z" fill="#ff4f2e"/>
<path d="M-3 -12.8 Q-7 -6 -6.4 2.6 Q-3 0.4 0 3 Q1.6 1.2 3.4 1.4 Q4 -6 1.4 -13 Q-1 -13.2 -3 -12.8 Z" fill="#ff9850"/>
<path d="M6 -12.4 Q10 -7 9.6 1.6 Q11 1.8 12 3 Q14 1 15.6 1.4 Q15 -7 10 -11 Q8 -12 6 -12.4 Z" fill="#ffab68"/>
</g>
<circle cx="35.4" cy="25.8" r="7.6" fill="url(#sn)"/>
<path d="M35.4 14.6 v-2.6 M43.6 18.6 l2.2 -2.4 M27.6 18.6 l-2 -2 M46.4 25.4 h2.2 M22.6 26 h2.4" stroke="#ffa628" stroke-width="1.3" stroke-linecap="round"/>
<path d="M44.6 33.6 Q50.6 27 52.4 15 L55.6 15.6 Q55.6 29 49.6 35 Z" fill="url(#pt)"/>
<g fill="#1ea64c"><path d="M54 13 Q47 7 43.6 11.6 Q48 10 54 13 Z M54 13 Q49 3.6 55 2 Q53.6 7 54 13 Z M54 13 Q58 4 63.6 7.4 Q58.6 8 54 13 Z M54 13 Q61 9.6 63.4 16 Q59.6 12.6 54 13 Z M54 13 Q47.6 12 46.4 17.6 Q49.6 13.6 54 13 Z M54 13 Q60 15 59.6 20 Q57.6 15.6 54 13 Z"/><circle cx="54" cy="10.4" r="4.4"/></g>
<path d="M50 10 Q53 6 57 9" stroke="#2fc462" stroke-width="1.2" fill="none"/>
<ellipse cx="36.3" cy="38.8" rx="17.6" ry="3.8" fill="#fff"/>
<ellipse cx="36.3" cy="36.4" rx="16.6" ry="3.6" fill="#fbc48c"/>
<path d="M19 39.6 Q36.3 45.6 53.6 39.6 V44.6 H19 Z" fill="#2e92ea"/>
<path d="M19 43.6 H53.6 V45 H19 Z" fill="#6a5ad8"/>
<path d="M22.6 33 l4 -1.2 l2.4 2.4 l-5 1.2 Z M48 33 l3 -0.6 l2 2 l-4 0.6 Z" fill="#8a4a3a"/>
</svg>
<div class="vip" style="left:16px;top:58px"><svg width="28" height="14" viewBox="0 0 28 14"><text x="3" y="11.4" font-family="Liberation Sans, sans-serif" font-weight="700" font-style="italic" font-size="12" fill="#f6cf8a" textLength="22" lengthAdjust="spacingAndGlyphs">VIP</text></svg></div>
<!-- search -->
<div class="gbtn" style="left:20px;top:123px;width:184px;height:35px;border-radius:6px"></div>
<svg class="abs" style="left:32px;top:134px" width="15" height="14" viewBox="0 0 15 14" fill="none" stroke="#484848" stroke-width="1.8"><circle cx="5.8" cy="5.8" r="4.8"/><path d="M9.4 9.4 L13.8 13.4"/></svg>
<span class="t" style="left:56px;top:135px;font-size:12.4px;color:#444">边框(4065)</span>
<svg class="abs" style="left:183px;top:136px" width="11" height="11" viewBox="0 0 11 11" stroke="#444" stroke-width="1.1"><path d="M0.5 0.5 L10.5 10.5 M10.5 0.5 L0.5 10.5"/></svg>
<div class="gbtn" style="left:214px;top:123px;width:35px;height:35px"></div>
<svg class="abs" style="left:225px;top:134px" width="14" height="14" viewBox="0 0 14 14"><path d="M0.6 0.8 H11.4 L7.4 6 V13 L4.8 11 V6 Z" fill="none" stroke="#3f3f3f" stroke-width="1.5" stroke-linejoin="round"/><path d="M9.6 7.4 H14 M9.6 10.2 H14 M9.6 13 H14" stroke="#3f3f3f" stroke-width="1.4"/></svg>
<!-- select -->
<div class="abs" style="left:20px;top:168px;width:229px;height:35px;border:1px solid #cbd5e1;border-radius:5px;background:#f3f3f3"></div>
<span class="t" style="left:31px;top:180.5px;font-size:12.2px;color:#444">所有</span>
<svg class="abs" style="left:226px;top:183px" width="11" height="6" viewBox="0 0 11 6" fill="none" stroke="#444" stroke-width="1.5"><path d="M1 0.6 L5.5 4.8 L10 0.6"/></svg>
<!-- tiles -->
<div class="tile" style="left:20px;top:218px">
<svg class="abs" style="left:1.6px;top:13.5px" width="62" height="36" viewBox="0 0 62 36"><path d="M16 30 Q4 30 3 22 Q2 14 12 13 Q14 4 26 4 Q32 1 38 4 Q50 4 51 13 Q60 14 60 22 Q59 30 46 30 Q40 33 31 33 Q22 33 16 30 Z" fill="#fff" stroke="#e2e2e2" stroke-width="1"/></svg>
<div class="bd bs" style="left:16px">商</div><div class="bd bp" style="left:36px">专业</div></div>
<div class="tile" style="left:100px;top:218px">
<svg class="abs" style="left:0px;top:14px" width="66" height="44" viewBox="0 0 66 44"><rect x="6.5" y="1.5" width="54" height="30" rx="2" fill="#fdf0dc" stroke="#a32810" stroke-width="1.2"/><path d="M20 8 L23 5 H46 L49 8 L46 11 H23 Z" fill="#a61c08"/><path d="M3 18 L34 30 L63 18 V38 H3 Z" fill="#f8c040"/><path d="M3 38 L34 28 L63 38 Z" fill="#f2b030"/></svg>
<div class="bd bs" style="left:16px">商</div><div class="bd bp" style="left:36px">专业</div></div>
<div class="tile" style="left:180px;top:218px">
<div class="abs" style="left:3.5px;top:28px;width:60px;height:11px;border-radius:6px;background:#ff6a4e;border:1px solid #ffc468"></div>
<div class="bd bs" style="left:16px">商</div><div class="bd bg" style="left:36px">标准</div></div>
<div class="tile" style="left:20px;top:298px">
<div class="abs" style="left:3px;top:18.5px;width:60px;height:30px;border-radius:3px;background:#a2440a"></div>
<div class="abs" style="left:5px;top:20.5px;width:56px;height:26px;border-radius:3px;border:1px dashed #f1d9b8"></div>
<div class="bd bs" style="left:16px">商</div><div class="bd bb" style="left:36px">基础</div></div>
<div class="tile" style="left:100px;top:298px">
<div class="abs" style="left:3px;top:26px;width:62.5px;height:15px;border-radius:4px 0 0 4px;background:#fff;border:1px solid #8a8a8a;border-right:none;box-shadow:0 1px 1px rgba(0,0,0,.25)"></div>
<div class="bd bs" style="left:46px">商</div></div>
<div class="tile" style="left:180px;top:298px">
<svg class="abs" style="left:3px;top:17px" width="62" height="34" viewBox="0 0 62 34"><path d="M3 1 H42 L48 8 H8 Q0 9 0.6 4.6 Q1 1 3 1 Z" fill="#f9c15a" opacity="0.9"/><rect x="10" y="5" width="51" height="27" rx="2" fill="#fbd28a" opacity="0.75" stroke="#f8b84c" stroke-width="0.8"/></svg>
<div class="bd bs" style="left:46px">商</div></div>
<!-- pagination -->
<div class="pg" style="left:19px"></div><div class="pg" style="left:54px"></div><div class="pg" style="left:189px"></div><div class="pg" style="left:224px"></div>
<svg class="abs" style="left:27px;top:396px" width="11" height="11" viewBox="0 0 11 11" fill="none" stroke="#b4b6bc" stroke-width="1.9"><path d="M1 0.5 V10.5 M9.6 1 L4.6 5.5 L9.6 10"/></svg>
<svg class="abs" style="left:64px;top:396px" width="7" height="11" viewBox="0 0 7 11" fill="none" stroke="#b4b6bc" stroke-width="1.9"><path d="M6 1 L1 5.5 L6 10"/></svg>
<svg class="abs" style="left:199px;top:396px" width="7" height="11" viewBox="0 0 7 11" fill="none" stroke="#b4b6bc" stroke-width="1.9"><path d="M1 1 L6 5.5 L1 10"/></svg>
<svg class="abs" style="left:232px;top:396px" width="11" height="11" viewBox="0 0 11 11" fill="none" stroke="#b4b6bc" stroke-width="1.9"><path d="M10 0.5 V10.5 M1.4 1 L6.4 5.5 L1.4 10"/></svg>
<div class="abs" style="left:90px;top:389px;width:46px;height:24px;background:#f3f3f3;border-radius:2px"></div>
<span class="t" style="left:96px;top:393.5px;font-size:13.6px;color:#444">7</span>
<span class="t" style="left:148px;top:393.5px;font-size:13.6px;color:#444">/ 113</span>
<!-- scrollbar -->
<div class="abs" style="left:259px;top:328px;width:6px;height:50px;border-radius:3px;background:#bdbdbd"></div>
</div>

<!-- TIMELINE -->
<div id="tl" class="abs">
<!-- coords relative: y-505 -->
<div class="hl" style="left:0;top:0;width:1065px;background:#d8d8d8"></div>
<!-- tabs -->
<svg class="abs" style="left:23px;top:16px" width="14" height="13" viewBox="0 0 14 13"><defs><pattern id="hat" width="2.6" height="2.6" patternUnits="userSpaceOnUse" patternTransform="rotate(-45)"><rect width="2.6" height="1.1" fill="#1a71e8"/></pattern></defs><rect x="0.6" y="0.6" width="12.6" height="11.8" rx="1.2" fill="url(#hat)" stroke="#1a71e8" stroke-width="1.1"/></svg>
<span class="t tab" style="left:43px;color:#1a71e8">背景</span>
<svg class="abs" style="left:87px;top:16px" width="15" height="14" viewBox="0 0 15 14" fill="none" stroke="#4d5056" stroke-width="1.1"><rect x="0.6" y="0.6" width="9.4" height="9" rx="1.4" fill="#fff"/><rect x="5" y="5" width="9" height="8.4" rx="1.4" fill="#b0b2b6"/><path d="M6 12 L12.6 6 M8.6 13 L13.6 8.6" stroke="#fff" stroke-width="0.9"/><rect x="0.6" y="0.6" width="9.4" height="9" rx="1.4" fill="#fff"/></svg>
<span class="t tab" style="left:107px">前景</span>
<svg class="abs" style="left:151px;top:16px" width="14" height="14" viewBox="0 0 14 14" fill="none" stroke="#4d5056"><rect x="0.5" y="0.5" width="13" height="12.6" rx="1.2"/><path d="M6 5.4 a1.9 1.9 0 1 0 0 3 M10.6 5.4 a1.9 1.9 0 1 0 0 3" stroke-width="0.9"/></svg>
<span class="t tab" style="left:171px">字幕</span>
<svg class="abs" style="left:213px;top:15px" width="14" height="14" viewBox="0 0 14 14" fill="none" stroke="#4d5056" stroke-width="0.9"><path d="M2.4 3 Q0.6 6.6 2.4 10.4 M4.4 4 Q3.2 6.6 4.4 9.4 M6 5 Q5.4 6.6 6 8.4"/><path d="M12 2.4 L9 7 H12.4 L9.6 11.6" stroke-width="1"/></svg>
<span class="t tab" style="left:233px">AI情感语音</span>
<div class="nb" style="left:290px;top:10px;width:8px;height:8px">N</div>
<svg class="abs" style="left:309px;top:16px" width="18" height="14" viewBox="0 0 18 14" fill="none" stroke="#4d5056" stroke-width="1"><rect x="0.5" y="4" width="9.6" height="9" rx="1.2" fill="#fff"/><rect x="7" y="0.5" width="10.4" height="9.4" rx="1.2" fill="#fff"/><path d="M10.4 4 V6.4 M12.4 2.8 V7.6 M14.4 3.6 V6.8 M3 9 H5.6 M4.3 9 V11" stroke-width="0.9"/></svg>
<span class="t tab" style="left:333px">语音合成</span>
<svg class="abs" style="left:397.5px;top:14.5px" width="17" height="17" viewBox="0 0 17 17"><circle cx="8.5" cy="8.5" r="7.7" fill="#d9e6fb" stroke="#2f7de8" stroke-width="1"/><circle cx="5.5" cy="8.5" r="1" fill="#1a71e8"/><circle cx="8.5" cy="8.5" r="1" fill="#1a71e8"/><circle cx="11.5" cy="8.5" r="1" fill="#1a71e8"/></svg>
<!-- playback -->
<svg class="abs" style="left:479.5px;top:20px" width="18" height="16" viewBox="0 0 18 16" fill="none" stroke="#55595f" stroke-width="1.5"><path d="M3.4 5.2 A7 7 0 1 1 3 10.6"/><path d="M0.4 3 L3 7 L6.4 4 Z" fill="#55595f" stroke="none"/><path d="M8.4 5.2 L12.2 8 L8.4 10.8 Z" fill="#55595f" stroke="none"/></svg>
<svg class="abs" style="left:531px;top:19.5px" width="15" height="17" viewBox="0 0 15 17"><path d="M0 0 L14.6 8.4 L0 16.8 Z" fill="#55595f"/></svg>
<svg class="abs" style="left:575.5px;top:21px" width="15" height="14" viewBox="0 0 15 14"><path d="M9 0 H15 V6 L12.8 3.8 L9.6 7 L8 5.4 L11.2 2.2 Z M6 14 H0 V8 L2.2 10.2 L5.4 7 L7 8.6 L3.8 11.8 Z" fill="#55595f"/></svg>
<!-- tools -->
<svg class="abs" style="left:643px;top:17px" width="14" height="13" viewBox="0 0 14 13" fill="none" stroke="#4d5056" stroke-width="1"><path d="M3 0.5 H1.6 a1 1 0 0 0 -1 1 V11.5 a1 1 0 0 0 1 1 H3 M11 0.5 H12.4 a1 1 0 0 1 1 1 V11.5 a1 1 0 0 1 -1 1 H11"/><path d="M3 6.5 H6 M4.5 5 V8 M8 6.5 H11 M9.5 5 V8" stroke-width="0.9"/></svg>
<div class="abs" style="left:657px;top:5px;width:12px;height:10px;border-radius:3px;background:#f0a355;color:#4a2a08;font-size:8px;font-weight:700;line-height:10px;text-align:center">V</div>
<svg class="abs" style="left:674px;top:16px" width="15" height="14" viewBox="0 0 15 14" fill="none" stroke="#4d5056" stroke-width="1"><path d="M1.6 3 H4 L5.4 0.6 H9.4 L10.8 3 H13 a1 1 0 0 1 1 1 V12.4 a1 1 0 0 1 -1 1 H1.6 a1 1 0 0 1 -1 -1 V4 a1 1 0 0 1 1 -1 Z"/><circle cx="7.4" cy="8" r="2.6"/></svg>
<svg class="abs" style="left:704.5px;top:16px" width="15" height="14" viewBox="0 0 15 14" fill="none" stroke="#4d5056" stroke-width="1"><path d="M0.6 2 V13.4 H11.4"/><path d="M8 2.6 H3 V11 H11.4 V7"/><path d="M6 8 L6.4 5.8 L12 0.6 L13.8 2.4 L8.2 7.6 Z"/></svg>
<svg class="abs" style="left:735px;top:15px" width="17" height="16" viewBox="0 0 17 16" fill="none" stroke="#4d5056" stroke-width="1"><path d="M4 1 H9.4 L6.7 3.4 Z"/><path d="M6.7 3.4 V15.4 M1 8.4 H8"/><rect x="8.6" y="7" width="7.6" height="3" rx="1.5" stroke="#b5b7bb"/></svg>
<svg class="abs" style="left:767px;top:16px" width="14" height="14" viewBox="0 0 14 14" fill="none" stroke="#4d5056" stroke-width="1"><path d="M0.6 0.8 H10.4 L6.8 5.6 V13 L4.4 11.4 V5.6 Z" stroke-linejoin="round"/><path d="M9.4 7.6 H13.6 M9.4 10.2 H13.6 M9.4 12.8 H13.6" stroke-width="0.9"/></svg>
<svg class="abs" style="left:796.5px;top:16px" width="17" height="14" viewBox="0 0 17 14" fill="none" stroke="#4d5056" stroke-width="1"><circle cx="3" cy="3" r="2"/><path d="M5 3 H16.4"/><circle cx="13" cy="11" r="2"/><path d="M0.4 11 H11"/></svg>
<svg class="abs" style="left:837.5px;top:16px" width="17" height="14" viewBox="0 0 17 14" fill="none" stroke="#4d5056" stroke-width="1"><rect x="0.5" y="0.5" width="15.4" height="13" rx="1.2"/><path d="M5 7 H11.4" stroke-width="1.2"/><path d="M3.4 7 L6 5 V9 Z M13 7 L10.4 5 V9 Z" fill="#4d5056" stroke="none"/></svg>
<svg class="abs" style="left:869px;top:16px" width="17" height="14" viewBox="0 0 17 14"><rect x="0.5" y="0.5" width="15.4" height="13" rx="1.2" fill="none" stroke="#4d5056"/><text x="8.2" y="10" text-anchor="middle" font-family="Liberation Sans, sans-serif" font-size="7.5" fill="#4d5056">1:1</text></svg>
<svg class="abs" style="left:900.5px;top:15.5px" width="16" height="16" viewBox="0 0 16 16" fill="none" stroke="#4d5056" stroke-width="1"><circle cx="8" cy="8" r="7.3"/><path d="M4.4 8 H11.6"/></svg>
<div class="abs" style="left:933px;top:22px;width:86px;height:2px;background:#e4e4e4"></div>
<div class="abs" style="left:924.5px;top:18.5px;width:9px;height:9px;border-radius:50%;border:1.5px solid #2b7de0;background:#fff"></div>
<svg class="abs" style="left:1032.5px;top:15.5px" width="16" height="16" viewBox="0 0 16 16" fill="none" stroke="#4d5056" stroke-width="1"><circle cx="8" cy="8" r="7.3"/><path d="M4.4 8 H11.6 M8 4.4 V11.6"/></svg>
<!-- row 2 -->
<div class="hl" style="left:0;top:47px;width:1065px;background:#d6dbe3"></div>
<div class="abs" style="left:203px;top:47px;width:1px;height:164px;background:#d6d9de"></div>
<div class="abs" style="left:1058px;top:47px;width:1px;height:164px;background:#d6d9de"></div>
<svg class="abs" style="left:14px;top:56px" width="14" height="12" viewBox="0 0 14 12" fill="none" stroke="#4d5056" stroke-width="1"><path d="M0.5 10.4 V1.6 a1 1 0 0 1 1 -1 H5 L6.4 2.4 H12.4 a1 1 0 0 1 1 1 V10.4 a1 1 0 0 1 -1 1 H1.5 a1 1 0 0 1 -1 -1 Z"/><path d="M3.6 7 H9.4 M7.4 5 L9.6 7 L7.4 9"/></svg>
<svg class="abs" style="left:39px;top:56px" width="14" height="13" viewBox="0 0 14 13" fill="none" stroke="#4d5056" stroke-width="1"><path d="M7 11.4 H1.5 a1 1 0 0 1 -1 -1 V1.6 a1 1 0 0 1 1 -1 H5 L6.4 2.4 H12.4 a1 1 0 0 1 1 1 V6"/><path d="M8 10 H13.4 M10.7 7.4 V12.6"/></svg>
<svg class="abs" style="left:66px;top:56px" width="9" height="13" viewBox="0 0 9 13" fill="none" stroke="#b9bbbf" stroke-width="1"><path d="M0.4 0.6 H8.6 M4.5 2 V12 M1 8.6 L4.5 12.2 L8 8.6"/></svg>
<svg class="abs" style="left:91px;top:56px" width="9" height="13" viewBox="0 0 9 13" fill="none" stroke="#b9bbbf" stroke-width="1"><path d="M0.4 12.4 H8.6 M4.5 11 V1 M1 4.4 L4.5 0.8 L8 4.4"/></svg>
<svg class="abs" style="left:123.5px;top:56px" width="12" height="13" viewBox="0 0 12 13" fill="none" stroke="#b9bbbf" stroke-width="1"><path d="M0 2.4 H12 M3.6 2.2 V0.6 H8.4 V2.2 M1.6 2.6 V11.4 a1 1 0 0 0 1 1 H9.4 a1 1 0 0 0 1 -1 V2.6 M4.6 5 V10 M7.4 5 V10"/></svg>
<svg class="abs" style="left:152px;top:57px" width="10" height="11" viewBox="0 0 10 11"><rect x="0" y="4.2" width="9.6" height="6.4" rx="0.8" fill="#5a6080"/><path d="M2.2 4.4 V3 a2.6 2.6 0 0 1 5.2 0 V4.4" fill="none" stroke="#5a6080" stroke-width="1.3"/></svg>
<svg class="abs" style="left:178.5px;top:57.5px" width="13" height="9" viewBox="0 0 13 9"><path d="M0 4.5 Q3 0 6.5 0 Q10 0 13 4.5 Q10 9 6.5 9 Q3 9 0 4.5 Z" fill="#5a6080"/><circle cx="6.5" cy="4.5" r="2.3" fill="#fff"/><circle cx="6.5" cy="4.5" r="1.2" fill="#5a6080"/></svg>
<!-- ruler -->
<div class="abs" style="left:238.3px;top:72px;width:1px;height:5px;background:#c8c8c8"></div><div class="abs" style="left:280.9px;top:72px;width:1px;height:5px;background:#c8c8c8"></div><div class="abs" style="left:323.5px;top:72px;width:1px;height:5px;background:#c8c8c8"></div><div class="abs" style="left:366.1px;top:72px;width:1px;height:5px;background:#c8c8c8"></div><div class="abs" style="left:408.7px;top:72px;width:1px;height:5px;background:#c8c8c8"></div><div class="abs" style="left:451.3px;top:72px;width:1px;height:5px;background:#c8c8c8"></div><div class="abs" style="left:493.9px;top:72px;width:1px;height:5px;background:#c8c8c8"></div><div class="abs" style="left:536.5px;top:67px;width:1px;height:10px;background:#c8c8c8"></div><div class="abs" style="left:579.1px;top:72px;width:1px;height:5px;background:#c8c8c8"></div><div class="abs" style="left:621.7px;top:72px;width:1px;height:5px;background:#c8c8c8"></div><div class="abs" style="left:664.3px;top:72px;width:1px;height:5px;background:#c8c8c8"></div><div class="abs" style="left:706.9px;top:72px;width:1px;height:5px;background:#c8c8c8"></div><div class="abs" style="left:749.5px;top:72px;width:1px;height:5px;background:#c8c8c8"></div><div class="abs" style="left:792.1px;top:72px;width:1px;height:5px;background:#c8c8c8"></div><div class="abs" style="left:834.7px;top:72px;width:1px;height:5px;background:#c8c8c8"></div><div class="abs" style="left:877.3px;top:72px;width:1px;height:5px;background:#c8c8c8"></div><div class="abs" style="left:919.9px;top:72px;width:1px;height:5px;background:#c8c8c8"></div><div class="abs" style="left:962.5px;top:67px;width:1px;height:10px;background:#c8c8c8"></div><div class="abs" style="left:1005.1px;top:72px;width:1px;height:5px;background:#c8c8c8"></div><div class="abs" style="left:1047.7px;top:72px;width:1px;height:5px;background:#c8c8c8"></div>
<span class="t" style="left:531.5px;top:49.7px;font-size:12.5px;color:#222;font-family:'Liberation Serif',serif">1s</span>
<span class="t" style="left:957.5px;top:49.7px;font-size:12.5px;color:#222;font-family:'Liberation Serif',serif">2s</span>
<div class="hl" style="left:0;top:77px;width:1059px"></div>
<!-- camera row -->
<div class="abs" style="left:0;top:78px;width:1058px;height:30px;background:#eceef2"></div>
<div class="abs" style="left:203px;top:78px;width:1px;height:30px;background:#d6d9de"></div>
<div class="hl" style="left:0;top:108px;width:1059px"></div>
<div class="hl" style="left:0;top:137px;width:1059px"></div>
<div class="hl" style="left:0;top:166px;width:1059px"></div>
<div class="hl" style="left:0;top:195px;width:1059px"></div>
<svg class="abs" style="left:9px;top:86px" width="18" height="12" viewBox="0 0 18 12"><rect x="0.5" y="0.5" width="12.6" height="11" fill="#d2d2d2" stroke="#8c8c8c"/><path d="M13.4 4.4 L16.6 2 V10 L13.4 7.6 Z" fill="#fff" stroke="#8c8c8c" stroke-width="0.9"/></svg>
<span class="t" style="left:40px;top:85.5px;font-size:12.2px;color:#222">镜头</span>
<svg class="abs" style="left:119px;top:84px" width="16" height="16" viewBox="0 0 16 16"><circle cx="8" cy="8" r="8" fill="#1a6fe0"/><text x="8" y="12.6" text-anchor="middle" font-family="Liberation Sans, sans-serif" font-weight="700" font-size="12.5" fill="#fff">?</text></svg>
<div class="dot" style="left:150px;top:90.5px"></div><div class="dot" style="left:178px;top:90.5px"></div>
<div class="blk" style="left:204px;top:80px;width:334px;height:24px;background:#5a9ee8;border-radius:0 3px 3px 0"></div>
<span class="bt" style="left:301px;top:86px">默认镜头</span>
<svg class="abs" style="left:564px;top:83px" width="18" height="18" viewBox="0 0 18 18"><path d="M9 0.4 L17.6 9 L9 17.6 L0.4 9 Z" fill="#5cb961" stroke="#4ea656" stroke-width="0.8"/><path d="M9 5.2 V12.8 M5.2 9 H12.8" stroke="#fff" stroke-width="1.8"/></svg>
<!-- layer rows -->
<svg class="abs" style="left:31px;top:117px" width="14" height="12" viewBox="0 0 14 12"><rect x="0.5" y="0.5" width="13" height="11" fill="#fff" stroke="#7f88a8"/><path d="M2 9.6 L5 5.6 L7 8 L9 6.4 L11.6 9.6 Z" fill="#5d6890"/><path d="M10.4 2 V5 M8.9 3.5 H11.9" stroke="#5d6890" stroke-width="0.9"/></svg><span class="t" style="left:60px;top:116.5px;font-size:12.4px;color:#222">山9</span>
<div class="dot" style="left:150px;top:121.5px"></div><div class="dot" style="left:178px;top:121.5px"></div>
<svg class="abs" style="left:204px;top:111px" width="247" height="23" viewBox="0 0 247 23"><rect width="247" height="23" fill="#68b1e6"/><path d="M0 0 H247 L0 17 Z" fill="#6799cd"/></svg>
<span class="bt" style="left:276.5px;top:117.0px">无</span>
<svg class="abs" style="left:479px;top:114px" width="18" height="18" viewBox="0 0 18 18"><path d="M9 0.4 L17.6 9 L9 17.6 L0.4 9 Z" fill="#5cb961" stroke="#4ea656" stroke-width="0.8"/><path d="M9 5.2 V12.8 M5.2 9 H12.8" stroke="#fff" stroke-width="1.8"/></svg>
<svg class="abs" style="left:878px;top:111px" width="180" height="23" viewBox="0 0 180 23"><rect width="180" height="23" fill="#68b1e6"/><path d="M0 0 H180 V20 Z" fill="#6799cd"/></svg>
<span class="bt" style="left:963px;top:117.0px">一直显示</span>
<svg class="abs" style="left:31px;top:146px" width="14" height="12" viewBox="0 0 14 12"><rect x="0.5" y="0.5" width="13" height="11" fill="#fff" stroke="#7f88a8"/><path d="M2 9.6 L5 5.6 L7 8 L9 6.4 L11.6 9.6 Z" fill="#5d6890"/><path d="M10.4 2 V5 M8.9 3.5 H11.9" stroke="#5d6890" stroke-width="0.9"/></svg><span class="t" style="left:60px;top:145.5px;font-size:12.4px;color:#222">山10</span>
<div class="dot" style="left:150px;top:150.5px"></div><div class="dot" style="left:178px;top:150.5px"></div>
<svg class="abs" style="left:204px;top:140px" width="247" height="23" viewBox="0 0 247 23"><rect width="247" height="23" fill="#68b1e6"/><path d="M0 0 H247 L0 17 Z" fill="#6799cd"/></svg>
<span class="bt" style="left:276.5px;top:146.0px">无</span>
<svg class="abs" style="left:479px;top:143px" width="18" height="18" viewBox="0 0 18 18"><path d="M9 0.4 L17.6 9 L9 17.6 L0.4 9 Z" fill="#5cb961" stroke="#4ea656" stroke-width="0.8"/><path d="M9 5.2 V12.8 M5.2 9 H12.8" stroke="#fff" stroke-width="1.8"/></svg>
<svg class="abs" style="left:878px;top:140px" width="180" height="23" viewBox="0 0 180 23"><rect width="180" height="23" fill="#68b1e6"/><path d="M0 0 H180 V20 Z" fill="#6799cd"/></svg>
<span class="bt" style="left:963px;top:146.0px">一直显示</span>
<svg class="abs" style="left:31px;top:175px" width="14" height="12" viewBox="0 0 14 12"><rect x="0.5" y="0.5" width="13" height="11" fill="#fff" stroke="#7f88a8"/><path d="M2 9.6 L5 5.6 L7 8 L9 6.4 L11.6 9.6 Z" fill="#5d6890"/><path d="M10.4 2 V5 M8.9 3.5 H11.9" stroke="#5d6890" stroke-width="0.9"/></svg><span class="t" style="left:60px;top:174.5px;font-size:12.4px;color:#222">背景-</span>
<div class="dot" style="left:150px;top:179.5px"></div><div class="dot" style="left:178px;top:179.5px"></div>
<svg class="abs" style="left:204px;top:169px" width="247" height="23" viewBox="0 0 247 23"><rect width="247" height="23" fill="#68b1e6"/><path d="M0 0 H247 L0 17 Z" fill="#6799cd"/></svg>
<span class="bt" style="left:276.5px;top:175.0px">无</span>
<svg class="abs" style="left:479px;top:172px" width="18" height="18" viewBox="0 0 18 18"><path d="M9 0.4 L17.6 9 L9 17.6 L0.4 9 Z" fill="#5cb961" stroke="#4ea656" stroke-width="0.8"/><path d="M9 5.2 V12.8 M5.2 9 H12.8" stroke="#fff" stroke-width="1.8"/></svg>
<svg class="abs" style="left:878px;top:169px" width="180" height="23" viewBox="0 0 180 23"><rect width="180" height="23" fill="#68b1e6"/><path d="M0 0 H180 V20 Z" fill="#6799cd"/></svg>
<span class="bt" style="left:963px;top:175.0px">一直显示</span>
<!-- playhead -->
<div class="abs" style="left:879.6px;top:77px;width:1.5px;height:119px;background:#f0101a;box-shadow:1px 0 0 rgba(255,255,255,.7)"></div>
<svg class="abs" style="left:872px;top:55px" width="17" height="23" viewBox="0 0 17 23"><defs><linearGradient id="ph" x1="0" y1="0" x2="0" y2="1"><stop offset="0" stop-color="#72adf0"/><stop offset="0.5" stop-color="#4a90e6"/><stop offset="1" stop-color="#2f7be0"/></linearGradient></defs><path d="M1.6 0.5 H15.4 a1.1 1.1 0 0 1 1.1 1.1 V14.8 L8.5 22.4 L0.5 14.8 V1.6 a1.1 1.1 0 0 1 1.1 -1.1 Z" fill="url(#ph)" stroke="#1a5fb8" stroke-width="1"/><path d="M5.4 5 V13 M8.5 5 V13 M11.6 5 V13 M8.5 17 V22" stroke="#1a5cb5" stroke-width="1.1"/></svg>
<!-- status -->
<span class="t" style="left:0px;top:201px;font-size:12.4px;color:#222">当前场景: 01&nbsp;&nbsp; 未命名</span>
<svg class="abs" style="left:178px;top:199px" width="13" height="13" viewBox="0 0 13 13" fill="none" stroke="#4d5056" stroke-width="1"><path d="M0.6 0.6 H7.4 V10.4 H0.6 Z M2 3 H6 M2 5.4 H6 M2 7.8 H6"/><path d="M7.6 2.6 H12.4 V12.6 H9 M9 5.4 H11 M9 8 H11"/></svg>
<!-- scrollbars -->
<div class="abs" style="left:288px;top:201.5px;width:735px;height:7px;border-radius:4px;background:#c1c1c1"></div>
<div class="abs" style="left:1061px;top:145px;width:5px;height:50px;border-radius:3px;background:#bdbdbd"></div>
</div>

</div>
</body>
</html>
